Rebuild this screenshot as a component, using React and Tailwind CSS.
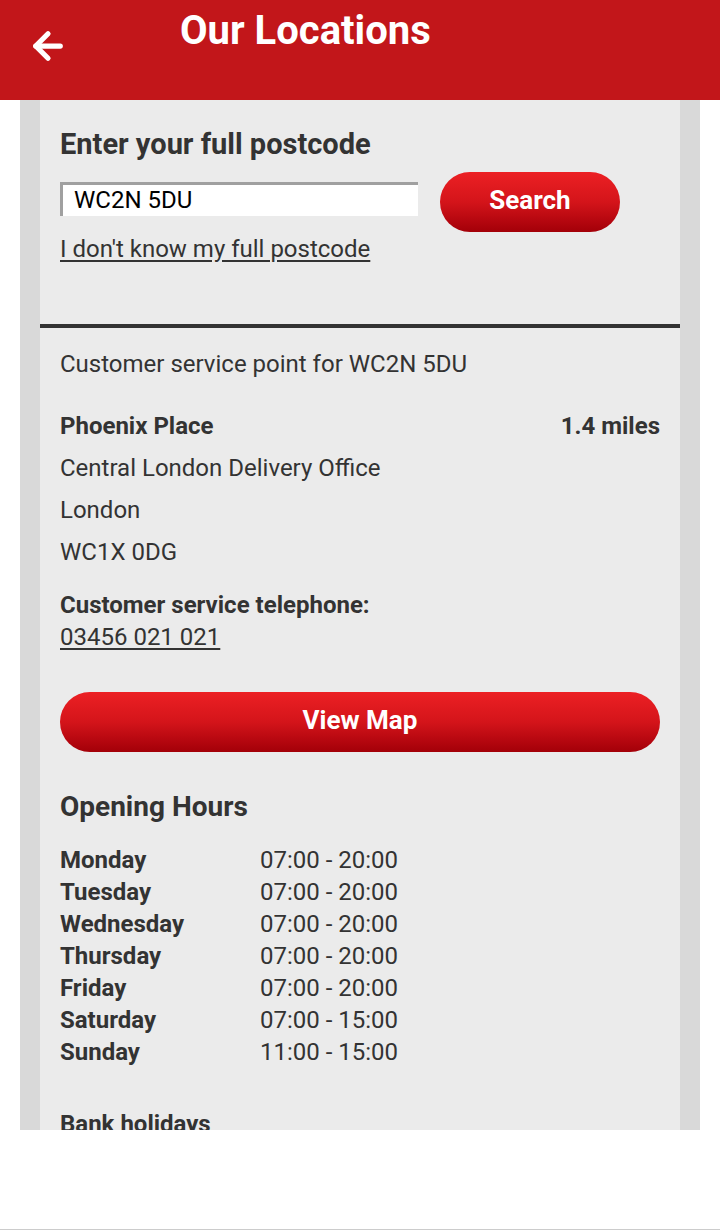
import { ArrowLeft } from 'lucide-react';

const hours = [
  ['Monday', '07:00 - 20:00'],
  ['Tuesday', '07:00 - 20:00'],
  ['Wednesday', '07:00 - 20:00'],
  ['Thursday', '07:00 - 20:00'],
  ['Friday', '07:00 - 20:00'],
  ['Saturday', '07:00 - 15:00'],
  ['Sunday', '11:00 - 15:00'],
];

const redBtn = 'rounded-full bg-gradient-to-b from-[#ec2024] via-[#d4141a] to-[#a30008] text-white font-bold text-[26px] pb-[3px]';

export default function App() {
  return (
    <div className="w-[720px] h-[1230px] bg-white font-['Roboto',sans-serif] text-[#333] flex flex-col border-b border-[#ccc]">
      <header className="h-[100px] bg-[#c2161a] flex items-start shrink-0">
        <div className="w-[96px] pt-[25px] pl-[27px]">
          <ArrowLeft size={42} strokeWidth={3} className="text-white" />
        </div>
        <h1 className="ml-[84px] mt-[8px] text-white font-bold text-[40px] leading-[46px]">Our Locations</h1>
      </header>

      <div className="h-[1030px] mx-[20px] bg-[#d9d9d9] px-[20px] overflow-hidden shrink-0">
        <div className="bg-[#ebebeb] h-full">
          <section className="px-[20px] pt-[26px] h-[224px]">
            <h2 className="font-bold text-[29px] leading-[36px]">Enter your full postcode</h2>
            <div className="flex items-start mt-[10px]">
              <div className="w-[358px] h-[34px] mt-[10px] bg-white border-t-[3px] border-l-[3px] border-[#a0a0a0] pl-[11px] text-[24px] leading-[30px] text-black">
                WC2N 5DU
              </div>
              <button className={`${redBtn} ml-[22px] w-[180px] h-[60px]`}>Search</button>
            </div>
            <a className="block mt-[2px] underline text-[24px] leading-[30px] underline-offset-[3px]">I don't know my full postcode</a>
          </section>

          <div className="h-[4px] bg-[#333]" />

          <section className="px-[20px] pt-[20px]">
            <p className="text-[24px] leading-[32px]">Customer service point for WC2N 5DU</p>
            <div className="flex justify-between mt-[30px] text-[24px] leading-[32px] font-bold">
              <span>Phoenix Place</span>
              <span>1.4 miles</span>
            </div>
            <div className="text-[24px] leading-[42px] mt-[5px]">
              <p>Central London Delivery Office</p>
              <p>London</p>
              <p>WC1X 0DG</p>
            </div>
            <p className="mt-[16px] font-bold text-[24px] leading-[32px]">Customer service telephone:</p>
            <a className="underline text-[24px] leading-[32px] underline-offset-[3px]">03456 021 021</a>
            <button className={`${redBtn} block w-full h-[60px] mt-[39px]`}>View Map</button>

            <h2 className="mt-[37px] font-bold text-[28px] leading-[36px]">Opening Hours</h2>
            <div className="mt-[19px] text-[24px] leading-[32px]">
              {hours.map(([d, t]) => (
                <div key={d} className="flex">
                  <span className="w-[200px] font-bold">{d}</span>
                  <span>{t}</span>
                </div>
              ))}
            </div>
            <p className="mt-[40px] font-bold text-[24px] leading-[32px]">Bank holidays</p>
          </section>
        </div>
      </div>
    </div>
  );
}
